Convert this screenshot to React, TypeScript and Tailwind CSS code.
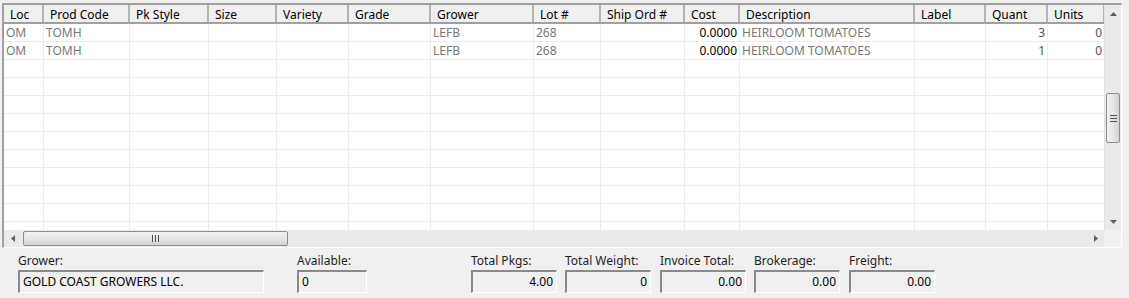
const cols = [
  { name: "Loc", w: 40, align: "left" },
  { name: "Prod Code", w: 86, align: "left" },
  { name: "Pk Style", w: 79, align: "left" },
  { name: "Size", w: 68, align: "left" },
  { name: "Variety", w: 72, align: "left" },
  { name: "Grade", w: 82, align: "left" },
  { name: "Grower", w: 103, align: "left" },
  { name: "Lot #", w: 67, align: "left" },
  { name: "Ship Ord #", w: 84, align: "left" },
  { name: "Cost", w: 55, align: "right" },
  { name: "Description", w: 175, align: "left" },
  { name: "Label", w: 71, align: "left" },
  { name: "Quant", w: 62, align: "right" },
  { name: "Units", w: 57, align: "right" },
];

const rows = [
  ["OM", "TOMH", "", "", "", "", "LEFB", "268", "", "0.0000", "HEIRLOOM TOMATOES", "", "3", "0"],
  ["OM", "TOMH", "", "", "", "", "LEFB", "268", "", "0.0000", "HEIRLOOM TOMATOES", "", "1", "0"],
];

const fields = [
  { label: "Grower:", value: "GOLD COAST GROWERS LLC.", w: 246, align: "left", ml: 18 },
  { label: "Available:", value: "0", w: 70, align: "left", ml: 33 },
  { label: "Total Pkgs:", value: "4.00", w: 86, align: "right", ml: 104 },
  { label: "Total Weight:", value: "0", w: 86, align: "right", ml: 8 },
  { label: "Invoice Total:", value: "0.00", w: 86, align: "right", ml: 9 },
  { label: "Brokerage:", value: "0.00", w: 86, align: "right", ml: 8 },
  { label: "Freight:", value: "0.00", w: 86, align: "right", ml: 9 },
];

const Arrow = ({ dir }: { dir: "up" | "down" | "left" | "right" }) => {
  const pts = {
    up: "0,4 7,4 3.5,0",
    down: "0,0 7,0 3.5,4",
    left: "4,0 4,7 0,3.5",
    right: "0,0 0,7 4,3.5",
  }[dir];
  const vert = dir === "up" || dir === "down";
  return (
    <svg width={vert ? 7 : 4} height={vert ? 4 : 7} viewBox={vert ? "0 0 7 4" : "0 0 4 7"}>
      <polygon points={pts} fill="#606060" />
    </svg>
  );
};

const App = () => {
  const total = 12;
  return (
    <div className="w-[1129px] h-[298px] bg-[#f0f0f0] overflow-hidden text-[12px] text-black" style={{ fontFamily: '"Noto Sans", "Open Sans", sans-serif' }}>
      <div className="ml-[2px] mt-[3px] w-[1120px] h-[245px] border-t-2 border-l-2 border-t-[#a0a0a0] border-l-[#a0a0a0] border-r border-b border-r-white border-b-white flex flex-col bg-white">
        <div className="flex flex-1 min-h-0">
          <div className="flex-1 min-w-0 overflow-hidden flex flex-col">
            <div className="flex h-[19px] bg-[#f0f0f0] border-b-2 border-b-[#a0a0a0] shrink-0">
              {cols.map((c) => (
                <div
                  key={c.name}
                  style={{ width: c.w }}
                  className="shrink-0 h-full flex items-center pl-[6px] pt-[2px] border-r-2 border-r-[#b4b4b4] leading-none whitespace-nowrap overflow-hidden"
                >
                  {c.name}
                </div>
              ))}
            </div>
            {Array.from({ length: total }).map((_, i) => {
              const r = rows[i];
              return (
                <div key={i} className="flex h-[18px] shrink-0 border-b border-b-[#ededed]">
                  {cols.map((c, j) => (
                    <div
                      key={j}
                      style={{ width: c.w }}
                      className={`shrink-0 h-full flex items-center px-[2px] pt-[1px] border-r border-r-[#ededed] whitespace-nowrap overflow-hidden leading-none ${
                        c.align === "right" ? "justify-end" : "justify-start"
                      } ${j === 9 ? "text-black" : j >= 12 ? "text-[#555]" : "text-[#787878]"}`}
                    >
                      {r ? r[j] : ""}
                    </div>
                  ))}
                </div>
              );
            })}
          </div>
          <div className="w-[17px] shrink-0 bg-[#eaeaea] border-l border-l-[#e0e0e0] flex flex-col items-center">
            <div className="h-[17px] flex items-center justify-center">
              <Arrow dir="up" />
            </div>
            <div className="flex-1 w-full relative">
              <div className="absolute left-[1px] right-[1px] top-[71px] h-[50px] rounded-[2px] border border-[#8f8f8f] bg-gradient-to-r from-[#f2f2f2] via-[#e6e6e6] to-[#d2d2d2] flex flex-col items-center justify-center gap-[2px]">
                <div className="w-[7px] h-[1px] bg-[#555]" />
                <div className="w-[7px] h-[1px] bg-[#555]" />
                <div className="w-[7px] h-[1px] bg-[#555]" />
              </div>
            </div>
            <div className="h-[17px] flex items-center justify-center">
              <Arrow dir="down" />
            </div>
          </div>
        </div>
        <div className="h-[17px] shrink-0 flex bg-[#eaeaea]">
          <div className="flex-1 flex items-center">
            <div className="w-[17px] flex items-center justify-center">
              <Arrow dir="left" />
            </div>
            <div className="ml-[2px] w-[265px] h-[15px] rounded-[2px] border border-[#8f8f8f] bg-gradient-to-b from-[#f2f2f2] via-[#e6e6e6] to-[#d2d2d2] flex items-center justify-center gap-[2px]">
              <div className="w-[1px] h-[7px] bg-[#555]" />
              <div className="w-[1px] h-[7px] bg-[#555]" />
              <div className="w-[1px] h-[7px] bg-[#555]" />
            </div>
            <div className="flex-1" />
            <div className="w-[17px] flex items-center justify-center">
              <Arrow dir="right" />
            </div>
          </div>
          <div className="w-[17px] bg-[#f0f0f0]" />
        </div>
      </div>
      <div className="flex mt-[5px]">
        {fields.map((f) => (
          <div key={f.label} style={{ marginLeft: f.ml }} className="flex flex-col">
            <div className="h-[15px] leading-[15px] text-[#1e1e1e]">{f.label}</div>
            <div
              style={{ width: f.w }}
              className={`mt-[2px] h-[23px] border-t-2 border-l-2 border-t-[#8a8a8a] border-l-[#8a8a8a] border-r border-b border-r-white border-b-white bg-[#f0f0f0] flex items-center px-[3px] whitespace-nowrap ${
                f.align === "right" ? "justify-end" : ""
              }`}
            >
              {f.value}
            </div>
          </div>
        ))}
      </div>
    </div>
  );
};

export default App;
